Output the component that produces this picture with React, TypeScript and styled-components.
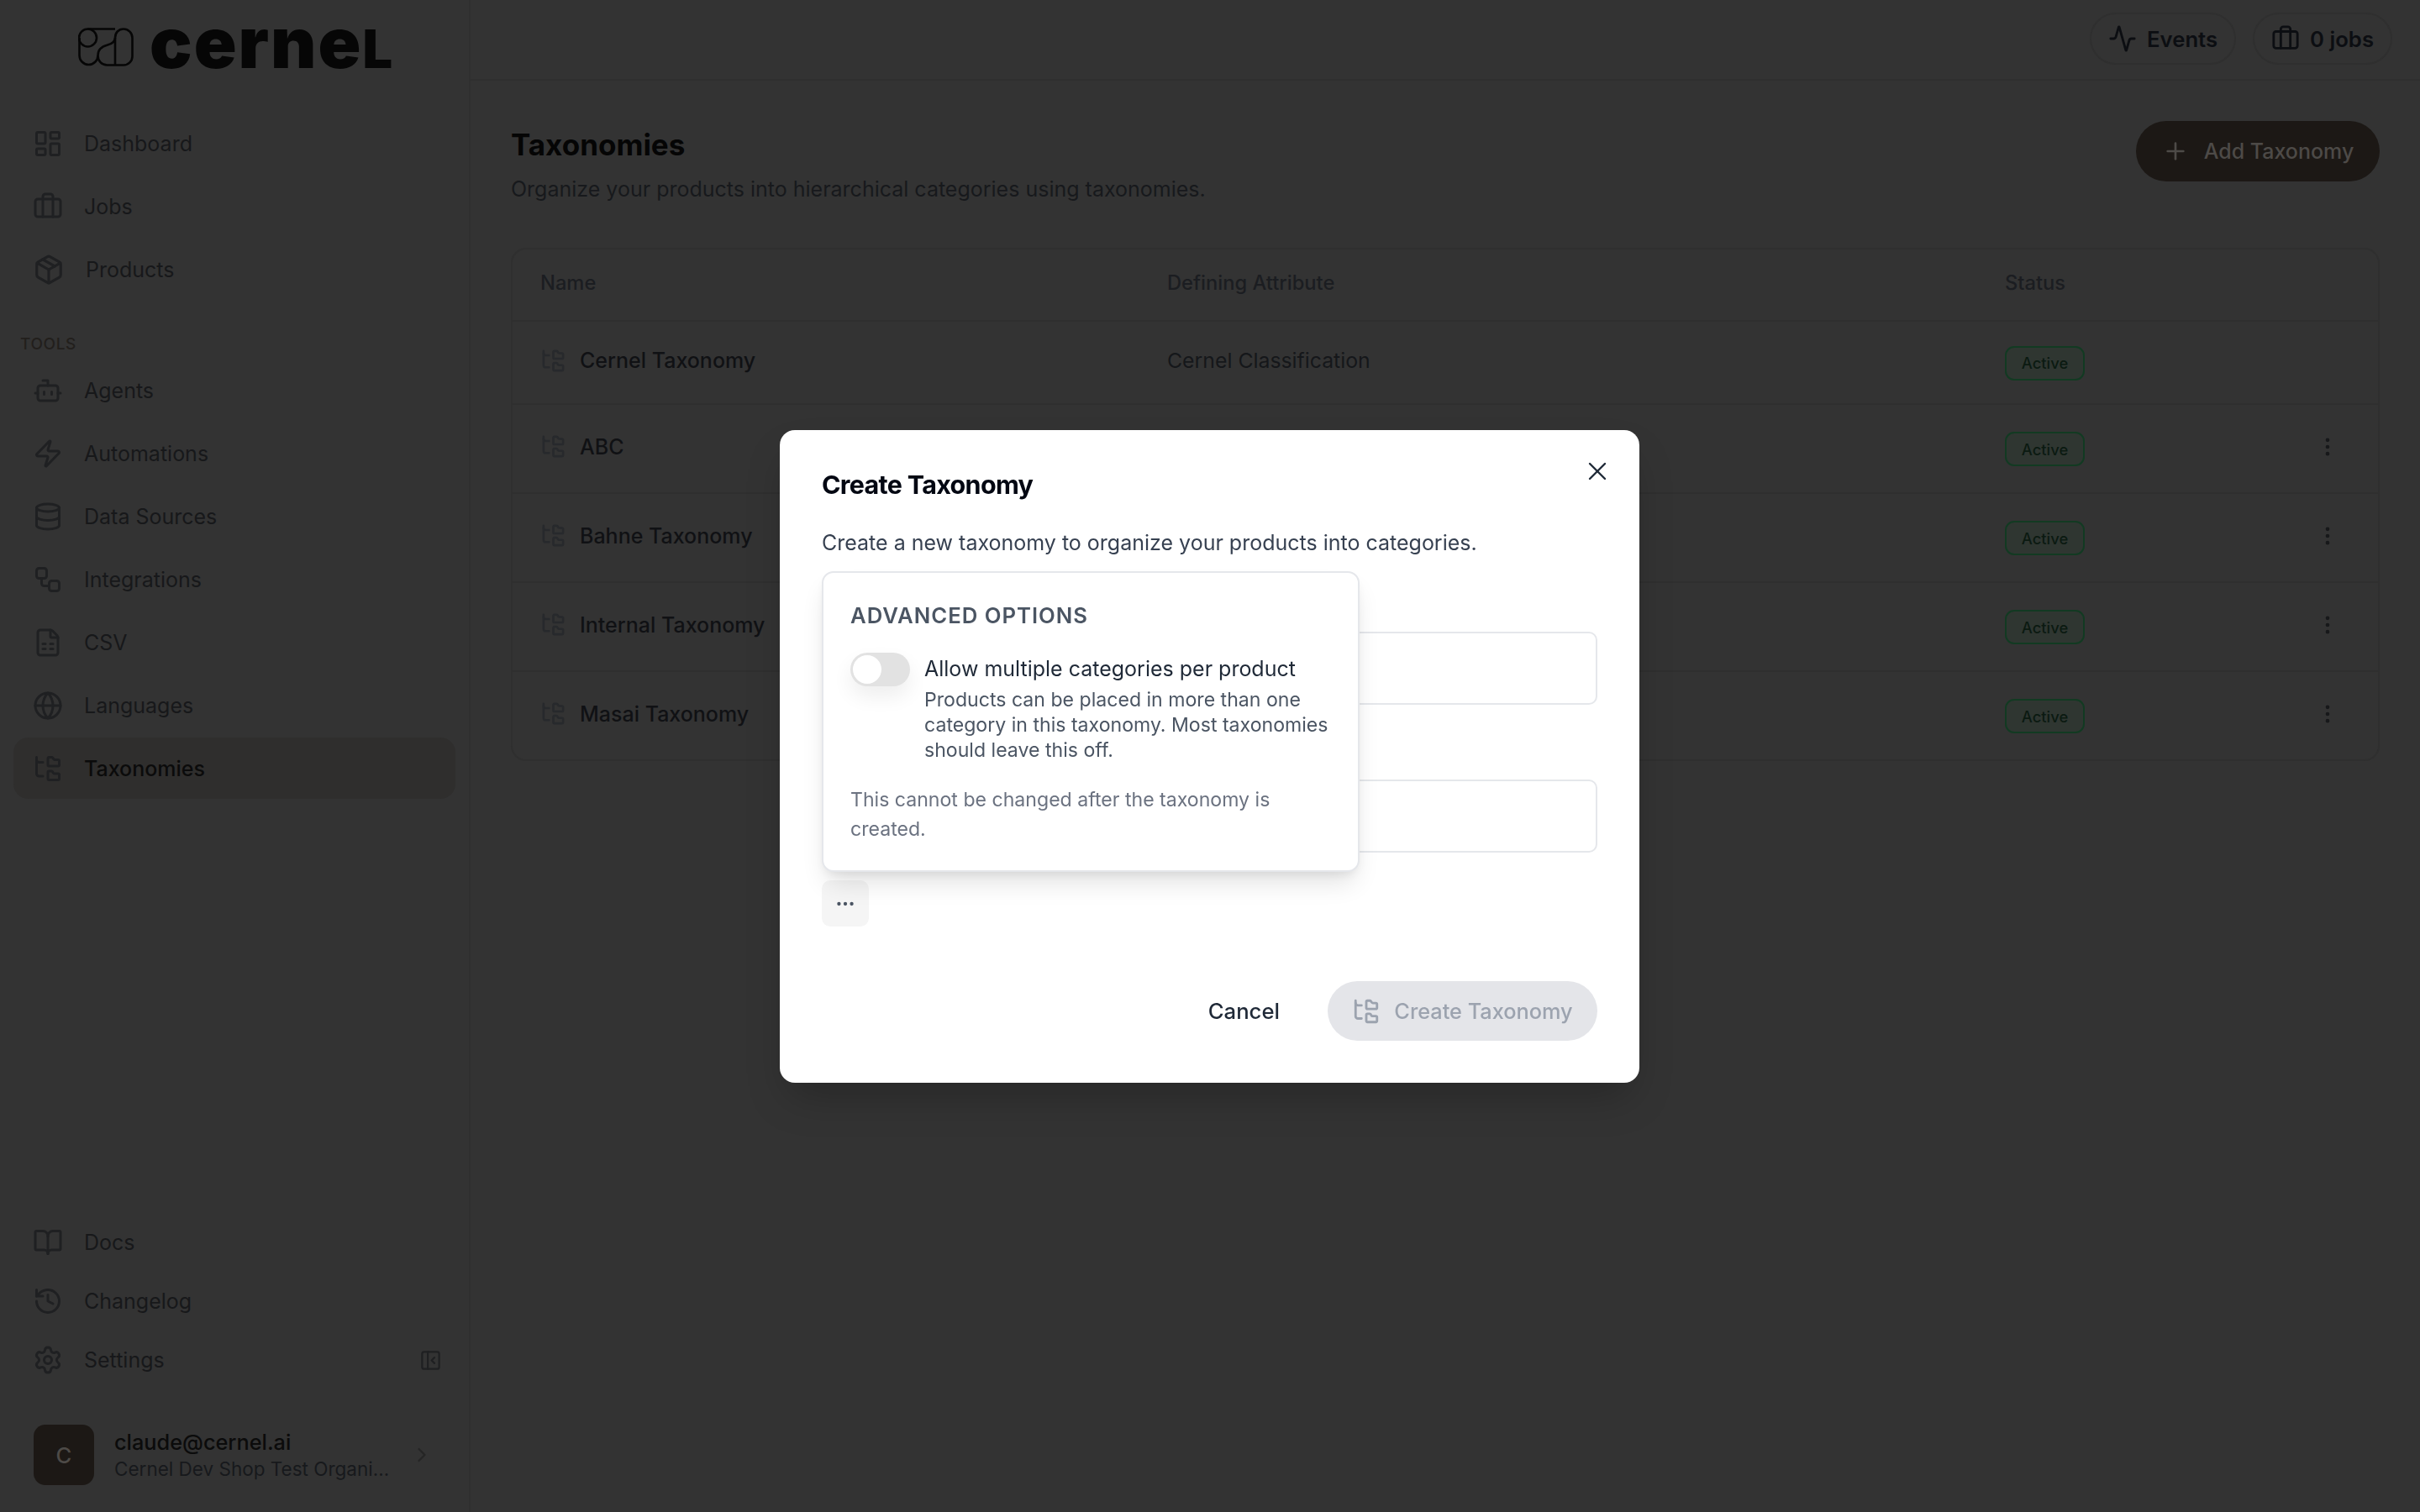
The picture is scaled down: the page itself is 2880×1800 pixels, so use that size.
import React from "react";
import styled, { createGlobalStyle } from "styled-components";
import {
  Activity,
  Bot,
  BookOpen,
  ChevronRight,
  Database,
  Ellipsis,
  EllipsisVertical,
  FileSpreadsheet,
  FolderTree,
  Globe,
  History,
  LayoutDashboard,
  Package,
  PanelLeftClose,
  Plus,
  Settings,
  Workflow,
  X,
  Zap,
} from "lucide-react";

const GlobalStyle = createGlobalStyle`
  * {
    box-sizing: border-box;
  }

  html,
  body {
    margin: 0;
    background: #333333;
    font-family: Inter, "Liberation Sans", sans-serif;
  }
`;

const JobsIcon = ({ size = 36 }: { size?: number }) => (
  <svg
    width={size}
    height={size}
    viewBox="0 0 24 24"
    fill="none"
    stroke="currentColor"
    strokeWidth="2"
    strokeLinecap="round"
    strokeLinejoin="round"
  >
    <path d="M16 20V4a2 2 0 0 0-2-2h-4a2 2 0 0 0-2 2v16" />
    <rect width="20" height="14" x="2" y="6" rx="2" />
  </svg>
);

const LogoMark = () => (
  <svg width="66" height="46" viewBox="0 0 66 46" fill="none" stroke="#060606" strokeWidth="2.6">
    <circle cx="11.5" cy="12" r="10.5" />
    <path d="M1.5 12V33a11 11 0 0 0 22 0" />
    <path d="M23.5 33C23.5 25 29 22 35 20.5 41 19 44 16 44 12 44 6 48 1.5 54 1.5a10.5 10.5 0 0 1 10.5 10.5V34a10.5 10.5 0 0 1-10.5 10.5H34.5A11 11 0 0 1 23.5 33" />
    <path d="M11.5 1.5H44" />
    <path d="M44 12V44.5" />
  </svg>
);

const mainLinks = [
  { label: "Dashboard", icon: <LayoutDashboard size={36} /> },
  { label: "Jobs", icon: <JobsIcon /> },
  { label: "Products", icon: <Package size={38} /> },
];

const toolLinks = [
  { label: "Agents", icon: <Bot size={36} /> },
  { label: "Automations", icon: <Zap size={36} /> },
  { label: "Data Sources", icon: <Database size={36} /> },
  { label: "Integrations", icon: <Workflow size={36} /> },
  { label: "CSV", icon: <FileSpreadsheet size={36} /> },
  { label: "Languages", icon: <Globe size={36} /> },
  { label: "Taxonomies", icon: <FolderTree size={36} />, active: true },
];

const taxonomies = [
  { name: "Cernel Taxonomy", attribute: "Cernel Classification", locked: true },
  { name: "ABC" },
  { name: "Bahne Taxonomy" },
  { name: "Internal Taxonomy" },
  { name: "Masai Taxonomy" },
];

const App = () => {
  return (
    <>
      <GlobalStyle />
      <Page>
        <Sidebar>
          <Brand>
            <LogoMark />
            <Wordmark>
              cerne<WordmarkEnd>L</WordmarkEnd>
            </Wordmark>
          </Brand>
          <NavGroup>
            {mainLinks.map((link) => (
              <NavItem key={link.label}>
                {link.icon}
                {link.label}
              </NavItem>
            ))}
          </NavGroup>
          <SectionLabel>TOOLS</SectionLabel>
          <NavGroup>
            {toolLinks.map((link) => (
              <NavItem key={link.label} $active={link.active}>
                {link.icon}
                {link.label}
              </NavItem>
            ))}
          </NavGroup>
          <BottomGroup>
            <NavItem $compact>
              <BookOpen size={36} />
              Docs
            </NavItem>
            <NavItem $compact>
              <History size={36} />
              Changelog
            </NavItem>
            <NavItem $compact>
              <Settings size={36} />
              Settings
              <CollapseIcon>
                <PanelLeftClose size={27} />
              </CollapseIcon>
            </NavItem>
          </BottomGroup>
          <UserRow>
            <Avatar>C</Avatar>
            <UserText>
              <UserName>claude@cernel.ai</UserName>
              <UserOrg>Cernel Dev Shop Test Organi…</UserOrg>
            </UserText>
            <ChevronRight size={28} color="#252525" />
          </UserRow>
        </Sidebar>

        <Main>
          <TopBar>
            <TopPill>
              <Activity size={34} />
              Events
            </TopPill>
            <TopPill>
              <JobsIcon size={34} />0 jobs
            </TopPill>
          </TopBar>
          <Content>
            <PageHead>
              <div>
                <PageTitle>Taxonomies</PageTitle>
                <PageSubtitle>
                  Organize your products into hierarchical categories using taxonomies.
                </PageSubtitle>
              </div>
              <AddButton>
                <Plus size={32} />
                Add Taxonomy
              </AddButton>
            </PageHead>
            <Table>
              <HeadRow>
                <span>Name</span>
                <span>Defining Attribute</span>
                <span>Status</span>
              </HeadRow>
              {taxonomies.map((item) => (
                <Row key={item.name} $short={item.locked}>
                  <NameCell>
                    <RowIcon>
                      <FolderTree size={31} />
                    </RowIcon>
                    {item.name}
                  </NameCell>
                  <AttributeCell>{item.attribute}</AttributeCell>
                  <div>
                    <Badge>Active</Badge>
                  </div>
                  {!item.locked && (
                    <KebabCell>
                      <EllipsisVertical size={28} />
                    </KebabCell>
                  )}
                </Row>
              ))}
            </Table>
          </Content>
        </Main>

        <ModalLayer>
          <Modal>
            <CloseButton>
              <X size={36} strokeWidth={1.6} />
            </CloseButton>
            <ModalTitle>Create Taxonomy</ModalTitle>
            <ModalText>Create a new taxonomy to organize your products into categories.</ModalText>
            <Form>
              <Input />
              <Input />
              <MoreButton>
                <Ellipsis size={26} />
              </MoreButton>
              <Popover>
                <PopoverTitle>ADVANCED OPTIONS</PopoverTitle>
                <OptionRow>
                  <Toggle>
                    <ToggleThumb />
                  </Toggle>
                  <div>
                    <OptionLabel>Allow multiple categories per product</OptionLabel>
                    <OptionHelp>
                      Products can be placed in more than one category in this taxonomy. Most
                      taxonomies should leave this off.
                    </OptionHelp>
                  </div>
                </OptionRow>
                <PopoverNote>This cannot be changed after the taxonomy is created.</PopoverNote>
              </Popover>
            </Form>
            <ModalFooter>
              <CancelButton>Cancel</CancelButton>
              <SubmitButton disabled>
                <FolderTree size={34} />
                Create Taxonomy
              </SubmitButton>
            </ModalFooter>
          </Modal>
        </ModalLayer>
      </Page>
    </>
  );
};

const Page = styled.div`
  display: flex;
  width: 2880px;
  height: 1800px;
  overflow: hidden;
  background: #333333;
`;

const Sidebar = styled.aside`
  display: flex;
  flex-direction: column;
  flex: 0 0 560px;
  padding: 0 16px 32px;
  border-right: 2px solid #2f2f2f;
`;

const Brand = styled.div`
  display: flex;
  align-items: center;
  gap: 19px;
  height: 134px;
  padding: 0 0 22px 77px;

  svg {
    flex-shrink: 0;
  }
`;

const Wordmark = styled.div`
  padding-bottom: 10px;
  font-size: 84px;
  line-height: 1;
  font-weight: 900;
  letter-spacing: 2px;
  color: #060606;
`;

const WordmarkEnd = styled.span`
  font-size: 63px;
`;

const NavGroup = styled.nav`
  display: flex;
  flex-direction: column;
  gap: 2px;
`;

const NavItem = styled.a<{ $active?: boolean; $compact?: boolean }>`
  display: flex;
  align-items: center;
  gap: 25px;
  height: ${(p) => (p.$compact ? "68px" : "73px")};
  padding: 0 16px 0 23px;
  border-radius: 18px;
  background: ${(p) => (p.$active ? "#2f2e2d" : "transparent")};
  color: ${(p) => (p.$active ? "#0b0b0b" : "#17181a")};
  font-size: 25px;
  font-weight: ${(p) => (p.$active ? 500 : 400)};

  svg {
    flex-shrink: 0;
    color: #1f2022;
  }
`;

const SectionLabel = styled.div`
  margin: 40px 0 5px 8px;
  font-size: 19px;
  line-height: 26px;
  font-weight: 500;
  letter-spacing: 0.6px;
  color: #221f1c;
`;

const BottomGroup = styled.div`
  display: flex;
  flex-direction: column;
  gap: 2px;
  margin-top: auto;
`;

const CollapseIcon = styled.span`
  display: flex;
  margin-left: auto;
`;

const UserRow = styled.div`
  display: flex;
  align-items: center;
  gap: 24px;
  margin-top: 43px;
  padding-left: 24px;
`;

const Avatar = styled.div`
  display: flex;
  align-items: center;
  justify-content: center;
  flex: 0 0 72px;
  height: 72px;
  border-radius: 14px;
  background: #1c1815;
  color: #4d4a47;
  font-size: 25.7px;
  font-weight: 500;
`;

const UserText = styled.div`
  width: 328px;
`;

const UserName = styled.div`
  font-size: 25.3px;
  line-height: 34px;
  font-weight: 500;
  color: #0b0b0b;
`;

const UserOrg = styled.div`
  font-size: 22.5px;
  line-height: 30px;
  white-space: nowrap;
  color: #17191c;
`;

const Main = styled.main`
  display: flex;
  flex-direction: column;
  flex: 1;
`;

const TopBar = styled.header`
  display: flex;
  align-items: center;
  justify-content: flex-end;
  gap: 20px;
  height: 96px;
  padding: 0 33px 2px 0;
  border-bottom: 2px solid #2f2f2f;
`;

const TopPill = styled.div`
  display: flex;
  align-items: center;
  gap: 12px;
  height: 62px;
  padding: 0 20px;
  border: 2px solid #2f2f2f;
  border-radius: 31px;
  color: #0c0e12;
  font-size: 25.7px;
  font-weight: 600;
`;

const Content = styled.div`
  padding: 48px 48px 0;
`;

const PageHead = styled.div`
  display: flex;
  align-items: flex-start;
  justify-content: space-between;
`;

const PageTitle = styled.h1`
  margin: 0;
  font-size: 35px;
  line-height: 56px;
  font-weight: 700;
  color: #050505;
`;

const PageSubtitle = styled.p`
  margin: 5px 0 0;
  font-size: 25px;
  line-height: 40px;
  color: #17191c;
`;

const AddButton = styled.div`
  display: flex;
  align-items: center;
  justify-content: center;
  gap: 18px;
  width: 290px;
  height: 72px;
  border-radius: 36px;
  background: #1c1815;
  color: #4d4a47;
  font-size: 25px;
  font-weight: 500;
`;

const Table = styled.div`
  margin-top: 50px;
  border: 2px solid #2f2f2f;
  border-radius: 18px;
`;

const rowColumns = `
  display: grid;
  grid-template-columns: 746px 997px 1fr 60px;
  align-items: center;
  padding: 0 30px 5px 33px;
`;

const HeadRow = styled.div`
  ${rowColumns}
  height: 84px;
  font-size: 23.7px;
  font-weight: 500;
  color: #1b1d21;
`;

const Row = styled.div<{ $short?: boolean }>`
  ${rowColumns}
  height: ${(p) => (p.$short ? "99px" : "106px")};
  border-top: 2px solid #2f2f2f;
`;

const NameCell = styled.div`
  display: flex;
  align-items: center;
  gap: 16px;
  font-size: 25px;
  font-weight: 500;
  color: #101114;
`;

const RowIcon = styled.span`
  display: flex;
  color: #27292c;
`;

const AttributeCell = styled.div`
  font-size: 24.8px;
  color: #15171a;
`;

const Badge = styled.span`
  display: inline-flex;
  align-items: center;
  justify-content: center;
  width: 95px;
  height: 41px;
  margin-top: 6px;
  border: 2px solid #123a22;
  border-radius: 11px;
  background: #2f3631;
  color: #0b1a11;
  font-size: 18.4px;
  font-weight: 500;
`;

const KebabCell = styled.div`
  display: flex;
  justify-content: center;
  color: #17181a;
`;

const ModalLayer = styled.div`
  position: fixed;
  inset: 0;
  padding: 512px 0 0 928px;
`;

const Modal = styled.section`
  position: relative;
  width: 1023px;
  height: 777px;
  padding: 40px 50px 50px;
  border-radius: 18px;
  background: #ffffff;
  box-shadow: 0 25px 50px -12px rgba(0, 0, 0, 0.25);
`;

const CloseButton = styled.div`
  position: absolute;
  top: 31px;
  right: 32px;
  display: flex;
  color: #1f2937;
`;

const ModalTitle = styled.h2`
  margin: 0;
  font-size: 30.5px;
  line-height: 50px;
  font-weight: 700;
  letter-spacing: -0.7px;
  color: #030712;
`;

const ModalText = styled.p`
  margin: 24px 0 0;
  font-size: 25px;
  line-height: 40px;
  color: #374151;
`;

const Form = styled.div`
  position: relative;
  display: flex;
  flex-direction: column;
  margin-top: 14px;
  padding-top: 72px;
`;

const Input = styled.div`
  height: 87px;
  margin-bottom: 89px;
  border: 2px solid #e5e7eb;
  border-radius: 10px;
  background: #ffffff;

  & + & {
    margin-bottom: 33px;
  }
`;

const MoreButton = styled.div`
  display: flex;
  align-items: center;
  justify-content: center;
  width: 56px;
  height: 55px;
  border-radius: 10px;
  background: #f5f5f5;
  color: #4b5563;
`;

const Popover = styled.div`
  position: absolute;
  top: 0;
  left: 0;
  width: 640px;
  height: 358px;
  padding: 34px 28px 34px 32px;
  border: 2px solid #e5e7eb;
  border-radius: 14px;
  background: #ffffff;
  box-shadow: 0 18px 30px -6px rgba(0, 0, 0, 0.12), 0 6px 12px -4px rgba(0, 0, 0, 0.08);
`;

const PopoverTitle = styled.div`
  font-size: 25.7px;
  line-height: 34px;
  font-weight: 600;
  letter-spacing: 1px;
  color: #4b5563;
`;

const OptionRow = styled.div`
  display: flex;
  gap: 17px;
  margin-top: 27px;
`;

const Toggle = styled.div`
  display: flex;
  align-items: center;
  flex: 0 0 71px;
  height: 40px;
  padding: 0 3px;
  border-radius: 20px;
  background: #e2e2e2;
  box-shadow: 0 12px 24px rgba(0, 0, 0, 0.07);
`;

const ToggleThumb = styled.div`
  width: 34px;
  height: 34px;
  border-radius: 50%;
  background: #ffffff;
`;

const OptionLabel = styled.div`
  font-size: 25px;
  line-height: 38px;
  color: #1f2937;
`;

const OptionHelp = styled.div`
  margin-top: 3px;
  font-size: 23.1px;
  line-height: 30px;
  color: #4b5563;
`;

const PopoverNote = styled.p`
  margin: 27px 0 0;
  font-size: 23.1px;
  line-height: 35px;
  color: #6b7280;
`;

const ModalFooter = styled.div`
  display: flex;
  align-items: center;
  justify-content: flex-end;
  gap: 57px;
  margin-top: 65px;
`;

const CancelButton = styled.div`
  font-size: 25.7px;
  font-weight: 500;
  color: #1f2937;
`;

const SubmitButton = styled.button`
  display: flex;
  align-items: center;
  justify-content: center;
  gap: 16px;
  width: 321px;
  height: 71px;
  border: 0;
  border-radius: 36px;
  background: #e4e5e9;
  color: #9ca3af;
  font-family: inherit;
  font-size: 25.3px;
  font-weight: 500;
`;

export default App;
